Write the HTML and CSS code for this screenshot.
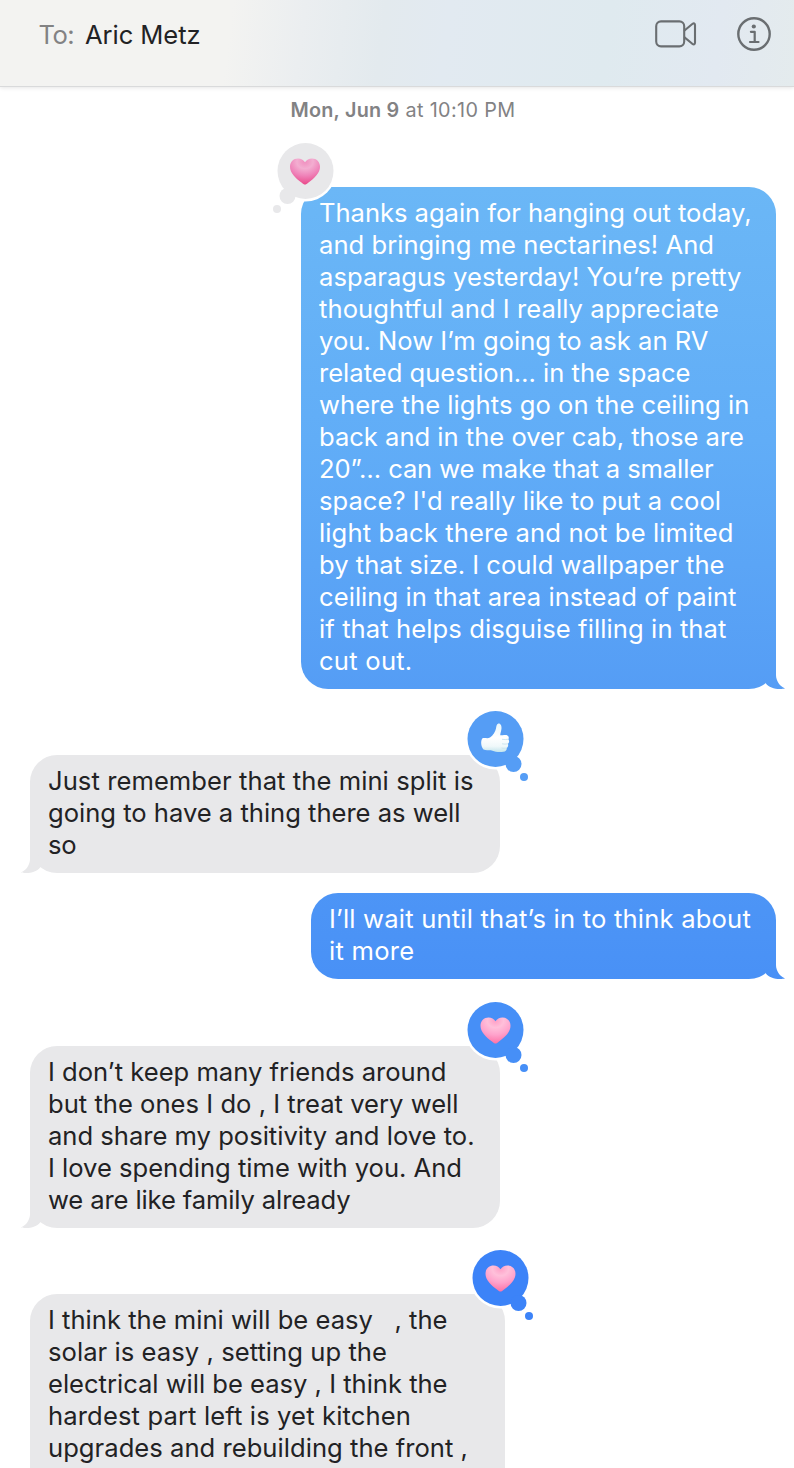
FILE: index.html
```html
<!DOCTYPE html>
<html lang="en">
<head>
<meta charset="utf-8">
<title>Messages</title>
<link rel="stylesheet" href="styles.css">
</head>
<body>
<svg width="0" height="0" class="defs" aria-hidden="true">
  <defs>
    <radialGradient id="pinkDeep" cx=".5" cy=".12" r=".9">
      <stop offset="0" stop-color="#f08fbf"/><stop offset=".3" stop-color="#f3aed1"/><stop offset=".6" stop-color="#ef83b9"/><stop offset=".9" stop-color="#eb5593"/><stop offset="1" stop-color="#e94386"/>
    </radialGradient>
    <radialGradient id="pinkLight" cx=".5" cy=".12" r=".9">
      <stop offset="0" stop-color="#ff9fc6"/><stop offset=".3" stop-color="#ffc0da"/><stop offset=".6" stop-color="#ffa3cc"/><stop offset="1" stop-color="#fd6fa4"/>
    </radialGradient>
    <linearGradient id="hand" x1="0" y1="0" x2="0" y2="1">
      <stop offset="0" stop-color="#e9f6fb"/><stop offset=".5" stop-color="#ffffff"/><stop offset=".8" stop-color="#eff8fa"/><stop offset="1" stop-color="#c3e4ec"/>
    </linearGradient>
    <path id="heart" d="M15 26.3C13.9 26.3 13 25.4 11.8 24.5C5.400 19.700 0 14.700 0 8.400C0 3.600 3.500 .2 8 .2C11 .2 13.500 1.700 15 4C16.500 1.700 19 .2 22 .2C26.500 .2 30 3.600 30 8.400C30 14.700 24.600 19.700 18.200 24.500C17 25.400 16.100 26.300 15 26.300Z"/>
  </defs>
</svg>

<header class="bar">
  <span class="to fit" data-w="35.5">To:</span>
  <span class="name fit" data-w="115.5">Aric Metz</span>
  <span class="actions">
    <svg width="42" height="28" viewBox="0 0 42 28" fill="none" stroke="#6a6e71" stroke-width="2.1" stroke-linejoin="round">
      <rect x="1.200" y="1.400" width="28" height="25" rx="4.800"/>
      <path d="M29.200 10.700L37.300 4C38.900 2.900 40 3.400 40 5V22.800C40 24.400 38.900 24.900 37.300 23.800L29.200 17.100"/>
    </svg>
    <svg width="34" height="34" viewBox="0 0 34 34" fill="none" stroke="#6a6e71">
      <circle cx="17" cy="17" r="15.700" stroke-width="2.400"/>
      <circle cx="16.800" cy="9.500" r="2.100" fill="#6a6e71" stroke="none"/>
      <path d="M13.900 14.800H17.700V25M13 25H21.500" stroke-width="2.200" stroke-linecap="round" stroke-linejoin="round"/>
    </svg>
  </span>
</header>

<main class="thread">
  <p class="stamp"><b class="fit" data-w="109">Mon, Jun 9</b><span class="fit" data-w="116"> at 10:10 PM</span></p>

  <div class="bubble sent first">
    <span class="fit" data-w="432.500">Thanks again for hanging out today,</span>
    <span class="fit" data-w="395">and bringing me nectarines! And</span>
    <span class="fit" data-w="422.500">asparagus yesterday! You’re pretty</span>
    <span class="fit" data-w="400">thoughtful and I really appreciate</span>
    <span class="fit" data-w="389.500">you. Now I’m going to ask an RV</span>
    <span class="fit" data-w="371.500">related question… in the space</span>
    <span class="fit" data-w="430.500">where the lights go on the ceiling in</span>
    <span class="fit" data-w="425">back and in the over cab, those are</span>
    <span class="fit" data-w="394.500">20”… can we make that a smaller</span>
    <span class="fit" data-w="402">space? I'd really like to put a cool</span>
    <span class="fit" data-w="414.500">light back there and not be limited</span>
    <span class="fit" data-w="405.500">by that size. I could wallpaper the</span>
    <span class="fit" data-w="417.500">ceiling in that area instead of paint</span>
    <span class="fit" data-w="407.500">if that helps disguise filling in that</span>
    <span class="fit" data-w="93.500">cut out.</span>
    <i class="tail"></i>
    <svg class="tapback left" style="color:#e8e8ea" width="66" height="76" viewBox="-2 -2 66 76">
      <circle cx="32.500" cy="30" r="30.500" fill="#fff"/><circle cx="14.500" cy="55" r="10" fill="#fff"/>
      <g fill="currentColor"><circle cx="32.500" cy="30" r="28"/><circle cx="14.500" cy="55" r="8"/><circle cx="4" cy="68" r="4"/></g>
      <use href="#heart" x="17" y="17.300" fill="url(#pinkDeep)"/>
    </svg>
  </div>

  <div class="bubble got second">
    <span class="fit" data-w="425.500">Just remember that the mini split is</span>
    <span class="fit" data-w="412.500">going to have a thing there as well</span>
    <span class="fit" data-w="28.500">so</span>
    <i class="tail"></i>
    <svg class="tapback right" style="color:#559df5" width="66" height="76" viewBox="-2 -2 66 76">
      <circle cx="29.500" cy="30" r="30.500" fill="#fff"/>
      <g fill="currentColor"><circle cx="29.500" cy="30" r="28"/><circle cx="47.500" cy="55" r="8"/><circle cx="58" cy="68" r="4"/></g>
      <path fill="url(#hand)" d="M16.200 29.500C18.500 28.300 21.500 30 24 28.500C27 26.500 29.300 23 30 19.500C30.300 17.500 30.500 15 32.400 14.500C34.700 14.300 35.700 17 35.500 19.500C35.300 22 34.300 24.300 34.200 26.300C35.500 26.300 37.500 25.900 39.500 25.900C42.500 25.900 43.500 28.600 42.300 30.200C43.600 31.500 43.300 33.800 41.900 34.800C42.700 36.300 42 38.200 40.700 38.900C41.100 41 39.500 42.500 37.500 42.700C34.500 43.300 29.500 43.200 26.500 41.800C23.500 40.400 20.500 42 17.500 40.500C15 37.500 14.500 32.500 16.200 29.500Z"/>
      <path d="M36 30.300C38 30.700 40.500 30.700 42.300 30.200M36 34.800C38 35.300 40.300 35.200 41.900 34.800M35.500 39C37.500 39.500 39.200 39.400 40.700 38.900" fill="none" stroke="#c9e3ee" stroke-width=".9"/>
    </svg>
  </div>

  <div class="bubble sent third">
    <span class="fit" data-w="422">I’ll wait until that’s in to think about</span>
    <span class="fit" data-w="85.500">it more</span>
    <i class="tail"></i>
  </div>

  <div class="bubble got fourth">
    <span class="fit" data-w="398.500">I don’t keep many friends around</span>
    <span class="fit" data-w="410.500">but the ones I do , I treat very well</span>
    <span class="fit" data-w="426.500">and share my positivity and love to.</span>
    <span class="fit" data-w="414">I love spending time with you. And</span>
    <span class="fit" data-w="302.500">we are like family already</span>
    <i class="tail"></i>
    <svg class="tapback right" style="color:#468ff7" width="66" height="76" viewBox="-2 -2 66 76">
      <circle cx="29.500" cy="30" r="30.500" fill="#fff"/>
      <g fill="currentColor"><circle cx="29.500" cy="30" r="28"/><circle cx="47.500" cy="55" r="8"/><circle cx="58" cy="68" r="4"/></g>
      <use href="#heart" x="14.500" y="17.300" fill="url(#pinkLight)"/>
    </svg>
  </div>

  <div class="bubble got fifth">
    <span class="fit" data-w="399.500">I think the mini will be easy   , the</span>
    <span class="fit" data-w="339">solar is easy , setting up the</span>
    <span class="fit" data-w="399.500">electrical will be easy , I think the</span>
    <span class="fit" data-w="363">hardest part left is yet kitchen</span>
    <span class="fit" data-w="420">upgrades and rebuilding the front ,</span>
    <svg class="tapback right" style="color:#3c83f8" width="66" height="76" viewBox="-2 -2 66 76">
      <circle cx="29.500" cy="30" r="30.500" fill="#fff"/>
      <g fill="currentColor"><circle cx="29.500" cy="30" r="28"/><circle cx="47.500" cy="55" r="8"/><circle cx="58" cy="68" r="4"/></g>
      <use href="#heart" x="14.500" y="17.300" fill="url(#pinkLight)"/>
    </svg>
  </div>
</main>
<script src="main.js"></script>
</body>
</html>
```
FILE: styles.css
```css
* { box-sizing: border-box; }

body {
  margin: 0;
  height: 1468px;
  overflow: hidden;
  background: #fff;
  color: #222224;
  font-family: Inter, "Liberation Sans", sans-serif;
  font-size: 25.6px;
  font-weight: 430;
  line-height: 32px;
}

.defs { position: absolute; }

.fit { white-space: pre; }

.bar {
  display: flex;
  align-items: center;
  height: 87px;
  padding: 0 23.500px 17px 38.500px;
  border-bottom: 1px solid #d9dadb;
  background: linear-gradient(97deg, #f3f3f1 0%, #f3f3f1 29%, #ebeef0 38%, #e3eaee 48%, #e2eaf1 56%, #dfeaef 76%, #e2e9f1 90%, #e4ebed 100%);
  box-shadow: 0 1px 4px rgba(0, 0, 0, .1);
}

.to { color: #828283; }

.name { margin-left: 11px; }

.actions {
  display: flex;
  align-items: center;
  gap: 40px;
  margin: -1px 0 0 auto;
}

.thread {
  display: flex;
  flex-direction: column;
  align-items: flex-start;
}

.stamp {
  align-self: center;
  margin: 11px 0 0 12px;
  color: #828284;
  font-size: 19.800px;
  line-height: 24px;
  white-space: nowrap;
}

.stamp b { font-weight: 600; }

.bubble {
  position: relative;
  display: flex;
  flex-direction: column;
  padding: 10px 18px 12px;
  border-radius: 27px;
}

.sent {
  align-self: flex-end;
  margin-right: 18px;
  color: #fff;
}

.sent, .sent .tail {
  background: linear-gradient(180deg, #6fbcf6 0, #6bb7f6 187px, #61adf7 440px, #559df5 689px, #4b93f6 936px, #468ef6 1030px, #3880f8 1468px) fixed;
}

.got { margin-left: 30px; }

.got, .got .tail { background: #e8e8ea; }

.first { width: 475px; margin-top: 65px; }
.second { width: 470px; margin-top: 66px; }
.third { width: 465px; margin-top: 20px; }
.fourth { width: 470px; margin-top: 67px; }
.fifth { width: 475px; margin-top: 66px; height: 240px; }

/* Speech tail hanging off the lower outer corner */
.tail {
  position: absolute;
  right: -9px;
  bottom: 0;
  width: 20px;
  height: 28px;
  clip-path: path("M4 0H11V14C11 20 15 25.500 20 27.300C18.500 28 17 28 15 28C9 28 3.500 26 .5 22Z");
}

.got .tail {
  right: auto;
  left: -9px;
  clip-path: path("M16 0H9V14C9 20 5 25.500 0 27.300C1.500 28 3 28 5 28C11 28 16.500 26 19.500 22Z");
}

/* Reaction balloon overlapping a top corner */
.tapback {
  position: absolute;
  top: -48px;
  overflow: visible;
}

.left { left: -30px; }
.right { right: -30px; }
```
FILE: main.js
```js
// Spread each line over its set width.
document.querySelectorAll('.fit').forEach(el => {
  const range = document.createRange();
  range.selectNodeContents(el);
  const width = range.getBoundingClientRect().width;
  el.style.letterSpacing = (el.dataset.w - width) / el.textContent.length + 'px';
});
```
